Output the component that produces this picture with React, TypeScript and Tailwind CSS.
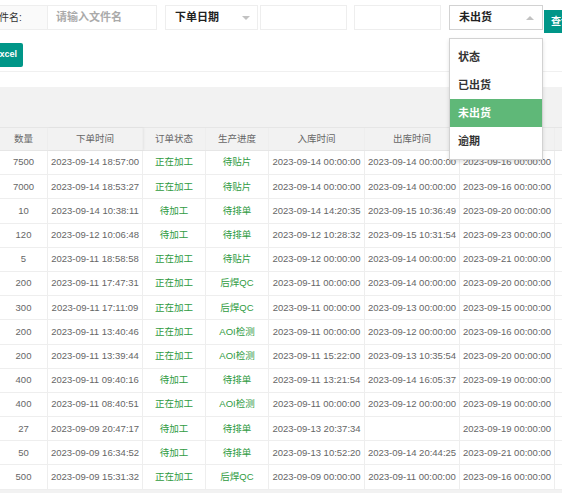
import React from 'react';

type Row = {
  qty: string;
  orderTime: string;
  status: string;
  progress: string;
  inTime: string;
  outTime: string;
  dueTime: string;
};

const rows: Row[] = [
  { qty: '7500', orderTime: '2023-09-14 18:57:00', status: '正在加工', progress: '待贴片', inTime: '2023-09-14 00:00:00', outTime: '2023-09-14 00:00:00', dueTime: '2023-09-16 00:00:00' },
  { qty: '7000', orderTime: '2023-09-14 18:53:27', status: '正在加工', progress: '待贴片', inTime: '2023-09-14 00:00:00', outTime: '2023-09-14 00:00:00', dueTime: '2023-09-16 00:00:00' },
  { qty: '10', orderTime: '2023-09-14 10:38:11', status: '待加工', progress: '待排单', inTime: '2023-09-14 14:20:35', outTime: '2023-09-15 10:36:49', dueTime: '2023-09-20 00:00:00' },
  { qty: '120', orderTime: '2023-09-12 10:06:48', status: '待加工', progress: '待排单', inTime: '2023-09-12 10:28:32', outTime: '2023-09-15 10:31:54', dueTime: '2023-09-23 00:00:00' },
  { qty: '5', orderTime: '2023-09-11 18:58:58', status: '正在加工', progress: '待贴片', inTime: '2023-09-12 00:00:00', outTime: '2023-09-14 00:00:00', dueTime: '2023-09-21 00:00:00' },
  { qty: '200', orderTime: '2023-09-11 17:47:31', status: '正在加工', progress: '后焊QC', inTime: '2023-09-11 00:00:00', outTime: '2023-09-14 00:00:00', dueTime: '2023-09-20 00:00:00' },
  { qty: '300', orderTime: '2023-09-11 17:11:09', status: '正在加工', progress: '后焊QC', inTime: '2023-09-11 00:00:00', outTime: '2023-09-13 00:00:00', dueTime: '2023-09-15 00:00:00' },
  { qty: '200', orderTime: '2023-09-11 13:40:46', status: '正在加工', progress: 'AOI检测', inTime: '2023-09-11 00:00:00', outTime: '2023-09-12 00:00:00', dueTime: '2023-09-16 00:00:00' },
  { qty: '200', orderTime: '2023-09-11 13:39:44', status: '正在加工', progress: 'AOI检测', inTime: '2023-09-11 15:22:00', outTime: '2023-09-13 10:35:54', dueTime: '2023-09-20 00:00:00' },
  { qty: '400', orderTime: '2023-09-11 09:40:16', status: '待加工', progress: '待排单', inTime: '2023-09-11 13:21:54', outTime: '2023-09-14 16:05:37', dueTime: '2023-09-19 00:00:00' },
  { qty: '400', orderTime: '2023-09-11 08:40:51', status: '正在加工', progress: 'AOI检测', inTime: '2023-09-11 00:00:00', outTime: '2023-09-12 00:00:00', dueTime: '2023-09-19 00:00:00' },
  { qty: '27', orderTime: '2023-09-09 20:47:17', status: '待加工', progress: '待排单', inTime: '2023-09-13 20:37:34', outTime: '', dueTime: '2023-09-19 00:00:00' },
  { qty: '50', orderTime: '2023-09-09 16:34:52', status: '待加工', progress: '待排单', inTime: '2023-09-13 10:52:20', outTime: '2023-09-14 20:44:25', dueTime: '2023-09-21 00:00:00' },
  { qty: '500', orderTime: '2023-09-09 15:31:32', status: '正在加工', progress: '后焊QC', inTime: '2023-09-09 00:00:00', outTime: '2023-09-11 00:00:00', dueTime: '2023-09-16 00:00:00' },
];

// fixed column widths, left to right
const cell = 'shrink-0 flex items-center justify-center border-r border-[#eee] whitespace-nowrap';

function Caret({ up }: { up?: boolean }) {
  return (
    <span
      className={
        up
          ? 'w-0 h-0 border-x-[4px] border-x-transparent border-b-[4px] border-b-[#c2c2c2]'
          : 'w-0 h-0 border-x-[4px] border-x-transparent border-t-[4px] border-t-[#c2c2c2]'
      }
    />
  );
}

export default function App() {
  const options = ['状态', '已出货', '未出货', '逾期'];

  return (
    <div className='relative w-[562px] h-[493px] overflow-hidden bg-white font-[family-name:Liberation_Sans,Noto_Sans_CJK_SC,sans-serif]'>
      {/* search form */}
      <div className="flex items-start pt-[5px] ml-[-28px] w-[640px]">
        <div className="shrink-0 w-[76px] h-[25px] flex items-center pl-[16px] border border-[#eee] bg-[#fafafa] text-[10px] text-[#333]">
          文件名:
        </div>
        <div className="shrink-0 w-[109px] h-[25px] flex items-center pl-[8px] border border-l-0 border-[#eee] text-[11px] font-semibold text-[#aaa]">
          请输入文件名
        </div>
        <div className="shrink-0 ml-[8px] w-[93px] h-[25px] flex items-center justify-between pl-[9px] pr-[7px] border border-[#eee] text-[11px] font-semibold text-[#222]">
          <span>下单日期</span>
          <Caret />
        </div>
        <div className="shrink-0 ml-[2px] w-[87px] h-[25px] border border-[#eee]" />
        <div className="shrink-0 ml-[7px] w-[87px] h-[25px] border border-[#eee]" />
        <div className="shrink-0 ml-[8px] w-[94px] h-[25px] flex items-center justify-between pl-[9px] pr-[8px] border border-[#d2d2d2] text-[11px] font-semibold text-[#222]">
          <span>未出货</span>
          <Caret up />
        </div>
        <button className="shrink-0 ml-[1px] mt-[5px] h-[23px] pl-[7px] pr-[10px] bg-[#009688] text-white text-[10px] font-bold whitespace-nowrap">
          查询
        </button>
      </div>

      {/* toolbar */}
      <div className="mt-[10px] ml-[-12.5px] flex">
        <button className="shrink-0 h-[24px] px-[6px] bg-[#009688] rounded-[2px] text-white text-[9px] font-bold">
          Excel
        </button>
      </div>
      <div className="mt-[4px] h-px bg-[#f0f0f0]" />

      {/* table */}
      <div className="mt-[15px] h-[40px] bg-[#f2f2f2]" />
      <div className="flex w-[640px] h-[24px] bg-[#f2f2f2] border-y border-[#e6e6e6] text-[9.5px] text-[#666]">
        <div className={`${cell} w-[48px] border-[#e2e2e2]`}>数量</div>
        <div className={`${cell} w-[95px] border-[#e2e2e2] shadow-[1px_0_2px_rgba(0,0,0,0.06)]`}>下单时间</div>
        <div className={`${cell} w-[63px] border-[#e2e2e2]`}>订单状态</div>
        <div className={`${cell} w-[63px] border-[#e2e2e2]`}>生产进度</div>
        <div className={`${cell} w-[96px] border-[#e2e2e2]`}>入库时间</div>
        <div className={`${cell} w-[95px] border-[#e2e2e2]`}>出库时间</div>
        <div className={`${cell} w-[95px] border-[#e2e2e2]`}>交货时间</div>
        <div className={`${cell} w-[80px] border-[#e2e2e2]`} />
      </div>
      {rows.map((r, i) => (
        <div key={i} className="flex w-[640px] h-[24.2px] border-b border-[#eee] text-[9.5px] text-[#666]">
          <div className={`${cell} w-[48px]`}>{r.qty}</div>
          <div className={`${cell} w-[95px]`}>{r.orderTime}</div>
          <div className={`${cell} w-[63px] text-[#2f9b3f]`}>{r.status}</div>
          <div className={`${cell} w-[63px] text-[#2f9b3f]`}>{r.progress}</div>
          <div className={`${cell} w-[96px]`}>{r.inTime}</div>
          <div className={`${cell} w-[95px]`}>{r.outTime}</div>
          <div className={`${cell} w-[95px]`}>{r.dueTime}</div>
          <div className={`${cell} w-[80px]`} />
        </div>
      ))}
      <div className="h-[6px] bg-[#f2f2f2]" />

      {/* open status dropdown */}
      <div className="absolute left-[449px] top-[38px] w-[94px] h-[122px] pt-[4px] bg-white border border-[#d2d2d2] shadow-[0_2px_4px_rgba(0,0,0,0.12)]">
        {options.map((o) => (
          <div
            key={o}
            className={
              o === '未出货'
                ? 'h-[28px] flex items-center pl-[8px] bg-[#5fb878] text-white text-[11px] font-semibold'
                : 'h-[28px] flex items-center pl-[8px] text-[#333] text-[11px] font-semibold'
            }
          >
            {o}
          </div>
        ))}
      </div>
    </div>
  );
}
